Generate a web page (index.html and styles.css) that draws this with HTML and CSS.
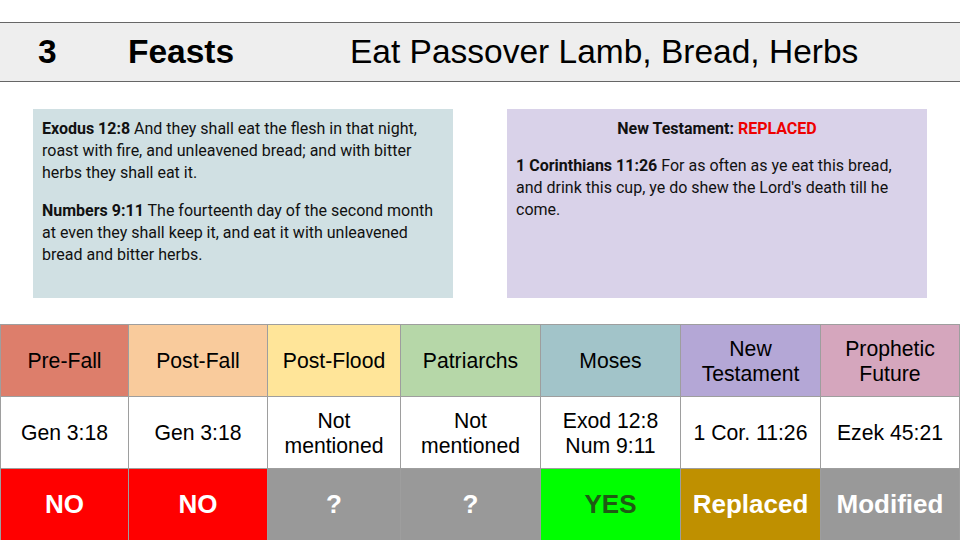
FILE: index.html
```html
<!DOCTYPE html>
<html>
<head>
<meta charset="utf-8">
<link rel="stylesheet" href="styles.css">
</head>
<body>
<div class="slide">
  <div class="band">
    <span class="num">3</span>
    <span class="cat">Feasts</span>
    <span class="title">Eat Passover Lamb, Bread, Herbs</span>
  </div>
  <div class="boxes">
    <div class="box ot">
      <p><b>Exodus 12:8</b> And they shall eat the flesh in that night, roast with fire, and unleavened bread; and with bitter herbs they shall eat it.</p>
      <p><b>Numbers 9:11</b> The fourteenth day of the second month at even they shall keep it, and eat it with unleavened bread and bitter herbs.</p>
    </div>
    <div class="box nt">
      <p class="nt-title"><b>New Testament: <span class="red">REPLACED</span></b></p>
      <p><b>1 Corinthians 11:26</b> For as often as ye eat this bread, and drink this cup, ye do shew the Lord's death till he come.</p>
    </div>
  </div>
  <div class="grid">
    <div class="cell h1">Pre-Fall</div>
    <div class="cell h2">Post-Fall</div>
    <div class="cell h3">Post-Flood</div>
    <div class="cell h4">Patriarchs</div>
    <div class="cell h5">Moses</div>
    <div class="cell h6">New<br>Testament</div>
    <div class="cell h7">Prophetic<br>Future</div>

    <div class="cell ref">Gen 3:18</div>
    <div class="cell ref">Gen 3:18</div>
    <div class="cell ref">Not<br>mentioned</div>
    <div class="cell ref">Not<br>mentioned</div>
    <div class="cell ref">Exod 12:8<br>Num 9:11</div>
    <div class="cell ref">1 Cor. 11:26</div>
    <div class="cell ref">Ezek 45:21</div>

    <div class="cell st no">NO</div>
    <div class="cell st no">NO</div>
    <div class="cell st unk">?</div>
    <div class="cell st unk">?</div>
    <div class="cell st yes">YES</div>
    <div class="cell st repl">Replaced</div>
    <div class="cell st unk">Modified</div>
  </div>
</div>
</body>
</html>
```
FILE: styles.css
```css
html, body {
  margin: 0;
  padding: 0;
  background: #ffffff;
}
.slide {
  width: 960px;
  height: 540px;
  overflow: hidden;
  position: relative;
  font-family: "Liberation Sans", Arial, sans-serif;
  color: #000;
}
.band {
  margin-top: 22px;
  height: 58px;
  background: #eeeeee;
  border-top: 1px solid #666666;
  border-bottom: 1px solid #666666;
  display: flex;
  align-items: center;
  padding-left: 38px;
  font-size: 33.5px;
}
.num {
  width: 90px;
  font-weight: bold;
}
.cat {
  width: 222px;
  font-weight: bold;
}
.boxes {
  display: flex;
  gap: 54px;
  margin-top: 27px;
  padding-left: 33px;
  height: 189px;
}
.box {
  width: 420px;
  height: 189px;
  box-sizing: border-box;
  padding: 9px 9px 0 9px;
  font-family: Roboto, "Liberation Sans", sans-serif;
  font-size: 16px;
  line-height: 22px;
  color: #111;
}
.box p {
  margin: 0 0 16px 0;
}
.ot { background: #d0e0e3; }
.nt { background: #d9d2e9; }
.nt-title {
  text-align: center;
}
.box p.nt-title { margin-bottom: 15px; }
.red { color: #ee0000; }
.grid {
  margin-top: 26px;
  display: grid;
  grid-template-columns: 127px 138px 132px 139px 139px 139px 138px;
  grid-template-rows: 71px 71px 71px;
  gap: 1px;
  padding: 1px;
  background: #9e9e9e;
}
.cell {
  display: flex;
  align-items: center;
  justify-content: center;
  text-align: center;
  font-size: 21.2px;
  line-height: 25px;
  background: #ffffff;
}
.h1 { background: #dd7e6b; }
.h2 { background: #f9cb9c; }
.h3 { background: #ffe599; }
.h4 { background: #b6d7a8; }
.h5 { background: #a2c4c9; }
.h6 { background: #b4a7d6; }
.h7 { background: #d5a6bd; }
.st {
  font-weight: bold;
  font-size: 26px;
  color: #ffffff;
}
.no { background: #ff0000; }
.unk { background: #999999; }
.yes { background: #00ff00; color: #1f5a14; }
.repl { background: #bf9000; }
```
